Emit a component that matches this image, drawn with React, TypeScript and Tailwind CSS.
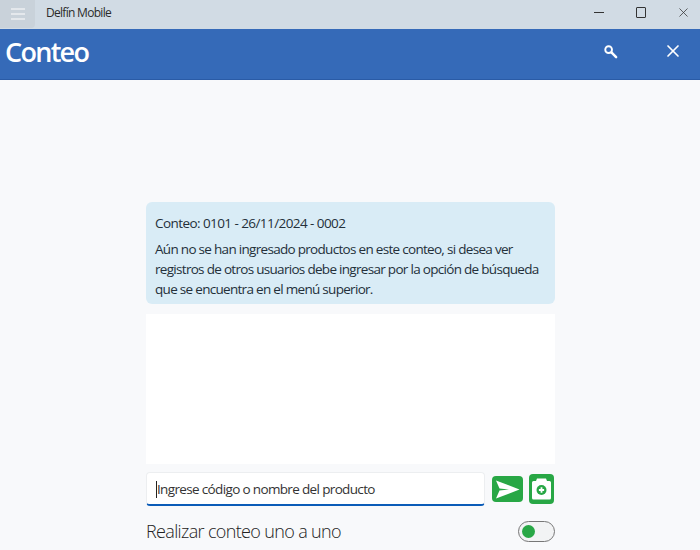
import { X } from "lucide-react"

export default function App() {
  return (
    <div className="h-[550px] w-[700px] overflow-hidden bg-[#f8f9fb] font-['Open_Sans',sans-serif] text-[#222]">
      {/* Title bar */}
      <div className="flex h-[29px] items-start bg-[#d1dbe4]">
        <div className="flex h-[28px] w-[35px] flex-col items-center gap-[3px] rounded-br bg-[#c9d2da] pt-[8px]">
          <span className="h-[2px] w-[14px] bg-[#e4e8ec]" />
          <span className="h-[2px] w-[14px] bg-[#e4e8ec]" />
          <span className="h-[2px] w-[14px] bg-[#e4e8ec]" />
        </div>
        <span className="ml-[11px] mt-[4px] text-[12px] leading-[18px] tracking-[-0.7px] text-[#2b2b2b]">Delfín Mobile</span>
        <div className="ml-auto mr-[-4px] mt-[4px] flex items-center text-[#333]">
          <div className="flex h-[16px] w-[42px] items-center justify-center">
            <span className="h-px w-[10px] bg-[#333]" />
          </div>
          <div className="flex h-[16px] w-[42px] items-center justify-center">
            <span className="h-[11px] w-[10px] rounded-[1px] border border-[#333]" />
          </div>
          <div className="flex h-[16px] w-[42px] items-center justify-center">
            <X size={15} strokeWidth={1.2} />
          </div>
        </div>
      </div>

      {/* App bar */}
      <header className="flex h-[51px] items-center border-b border-[#2a5ba6] bg-[#356ab8] pl-[5px] text-white">
        <h1 className="mb-[3px] text-[27px] font-semibold tracking-[-1.7px]">Conteo</h1>
        <svg className="ml-auto mb-[6px]" width="15" height="15" viewBox="0 0 16 16" fill="none" stroke="white">
          <circle cx="6" cy="6" r="3.6" strokeWidth="2" />
          <path d="M9 9l5 5" strokeWidth="2.6" strokeLinecap="round" />
        </svg>
        <div className="ml-[45px] mr-[17px] mb-[6px] flex w-[20px] justify-center">
          <X size={20} strokeWidth={2} />
        </div>
      </header>

      {/* Content */}
      <main className="ml-[146px] w-[409px] pt-[122px]">
        <div className="h-[102px] rounded-md bg-[#d9ecf6] px-[9px] pt-[11px] text-[13.5px] text-[#24303a]">
          <p className="leading-[20px] tracking-[-0.57px]">Conteo: 0101 - 26/11/2024 - 0002</p>
          <p className="mt-[6px] leading-[20px] tracking-[-0.7px]">
            Aún no se han ingresado productos en este conteo, si desea ver registros de otros usuarios debe ingresar por la opción de búsqueda que se encuentra en el menú superior.
          </p>
        </div>

        <div className="mt-[10px] h-[150px] bg-white" />

        <div className="mt-[8px] flex items-start">
          <div className="flex h-[34px] w-[339px] items-center rounded border border-[#eceef0] border-b-2 border-b-[#0b5cb8] bg-white pl-[9px] pt-[2px] text-[13.5px] tracking-[-0.65px] text-[#333]">
            <span className="h-[17px] w-px bg-[#222]" />
            <span>Ingrese código o nombre del producto</span>
          </div>
          <button className="ml-[7px] mt-[4px] flex h-[26px] w-[31px] items-center justify-center rounded-sm bg-[#28a745]">
            <svg width="25" height="19" viewBox="0 0 25 19" fill="white">
              <path d="M1 0.5L24.5 9.5L1 18.5L4.5 10.5L14 9.5L4.5 8.5Z" />
            </svg>
          </button>
          <button className="ml-[6px] mt-[2px] flex h-[30px] w-[25px] items-center justify-center rounded-sm bg-[#28a745]">
            <svg width="19" height="22" viewBox="0 0 19 22">
              <path d="M5 0.5H14L15 3H17.5A1.5 1.5 0 0 1 19 4.5V20A1.5 1.5 0 0 1 17.5 21.5H1.5A1.5 1.5 0 0 1 0 20V4.5A1.5 1.5 0 0 1 1.5 3H4Z" fill="white" />
              <circle cx="9.5" cy="12" r="5" fill="#28a745" />
              <path d="M9.5 9.2V14.8M6.9 12H12.1" stroke="white" strokeWidth="1.8" />
            </svg>
          </button>
        </div>

        <div className="mt-[12px] flex items-center justify-between">
          <span className="text-[18px] font-light tracking-[-0.65px] text-[#222]">Realizar conteo uno a uno</span>
          <div className="flex h-[21px] w-[37px] items-center rounded-full border border-[#777] bg-[#f2f3f4] pl-[3px]">
            <span className="h-[13px] w-[13px] rounded-full bg-[#28a745]" />
          </div>
        </div>
      </main>
    </div>
  )
}
